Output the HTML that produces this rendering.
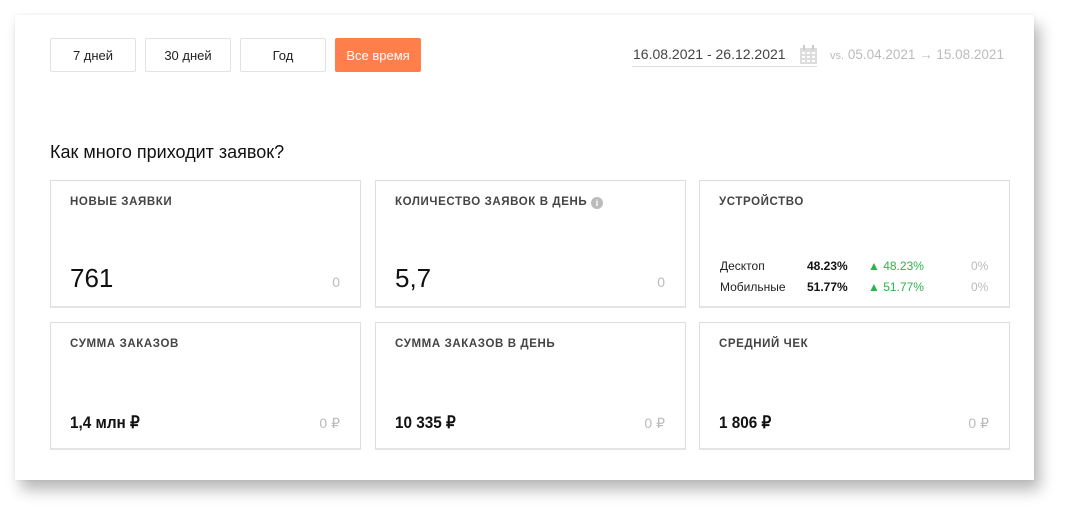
<!DOCTYPE html>
<html><head><meta charset="utf-8"><style>
*{box-sizing:border-box;margin:0;padding:0}
body{width:1069px;height:515px;background:#fff;font-family:"Liberation Sans",sans-serif;position:relative;overflow:hidden}
.panel{position:absolute;left:15px;top:15px;width:1019px;height:465px;background:#fff;box-shadow:6px 10px 14px rgba(0,0,0,.28),0 0 3px rgba(0,0,0,.08)}
.btn{position:absolute;top:38px;width:86px;height:34px;border:1px solid #e2e2e2;border-radius:2px;font-size:13px;color:#222;text-align:center;line-height:33px}
.btn.on{background:#ff7f4a;border-color:#ff7f4a;color:#fff}
.abs{position:absolute;white-space:nowrap}
.card{position:absolute;width:311px;height:128px;border:1px solid #dedede;border-bottom:2px solid #e4e4e4}
.card .t{position:absolute;left:19px;top:15px;font-size:11.5px;letter-spacing:.6px;color:#444;font-weight:bold}
.card .v{position:absolute;left:19px;bottom:12px;font-size:26px;color:#111}
.card .vs{position:absolute;left:19px;bottom:15px;font-size:17px;color:#111;font-weight:bold;transform:scaleX(.9);transform-origin:left}
.card .z{position:absolute;right:20px;bottom:16px;font-size:14px;color:#bbb}
.row{position:absolute;left:20px;font-size:12px;color:#222}
</style></head><body>
<div class="panel"></div>
<div class="btn" style="left:50px">7 дней</div>
<div class="btn" style="left:145px">30 дней</div>
<div class="btn" style="left:240px">Год</div>
<div class="btn on" style="left:335px">Все время</div>
<div class="abs" style="left:633px;top:46px;font-size:14px;color:#444">16.08.2021 - 26.12.2021</div>
<div class="abs" style="left:632px;top:66px;width:185px;border-top:1px solid #ddd"></div>
<svg class="abs" style="left:800px;top:45px" width="17" height="19" viewBox="0 0 17 19"><rect x="0" y="3" width="17" height="16" fill="#ddd"/><rect x="3" y="0" width="2" height="5" fill="#ccc"/><rect x="12" y="0" width="2" height="5" fill="#ccc"/><g fill="#fff"><rect x="2" y="7" width="3" height="2"/><rect x="7" y="7" width="3" height="2"/><rect x="12" y="7" width="3" height="2"/><rect x="2" y="11" width="3" height="2"/><rect x="7" y="11" width="3" height="2"/><rect x="12" y="11" width="3" height="2"/><rect x="2" y="15" width="3" height="2"/><rect x="7" y="15" width="3" height="2"/><rect x="12" y="15" width="3" height="2"/></g></svg>
<div class="abs" style="left:830px;top:47px;font-size:13.5px;color:#bbb"><span style="font-size:11px">vs.</span> 05.04.2021 → 15.08.2021</div>
<div class="abs" style="left:50px;top:142px;font-size:18px;color:#111">Как много приходит заявок?</div>

<div class="card" style="left:50px;top:180px"><div class="t">НОВЫЕ ЗАЯВКИ</div><div class="v">761</div><div class="z">0</div></div>
<div class="card" style="left:375px;top:180px"><div class="t">КОЛИЧЕСТВО ЗАЯВОК В ДЕНЬ <span style="display:inline-block;width:12px;height:12px;border-radius:50%;background:#bbb;color:#fff;font-size:9px;text-align:center;line-height:12px;letter-spacing:0;vertical-align:-1px">i</span></div><div class="v">5,7</div><div class="z">0</div></div>
<div class="card" style="left:699px;top:180px"><div class="t">УСТРОЙСТВО</div>
<div class="row" style="top:78px">Десктоп</div><div class="row" style="top:78px;left:107px;font-weight:bold;color:#111">48.23%</div><div class="row" style="top:78px;left:168px;color:#2db34a">▲ 48.23%</div><div class="row" style="top:78px;left:271px;color:#bbb">0%</div>
<div class="row" style="top:99px">Мобильные</div><div class="row" style="top:99px;left:107px;font-weight:bold;color:#111">51.77%</div><div class="row" style="top:99px;left:168px;color:#2db34a">▲ 51.77%</div><div class="row" style="top:99px;left:271px;color:#bbb">0%</div>
</div>

<div class="card" style="left:50px;top:322px"><div class="t">СУММА ЗАКАЗОВ</div><div class="vs">1,4 млн ₽</div><div class="z">0 ₽</div></div>
<div class="card" style="left:375px;top:322px"><div class="t">СУММА ЗАКАЗОВ В ДЕНЬ</div><div class="vs">10 335 ₽</div><div class="z">0 ₽</div></div>
<div class="card" style="left:699px;top:322px"><div class="t">СРЕДНИЙ ЧЕК</div><div class="vs">1 806 ₽</div><div class="z">0 ₽</div></div>
</body></html>
